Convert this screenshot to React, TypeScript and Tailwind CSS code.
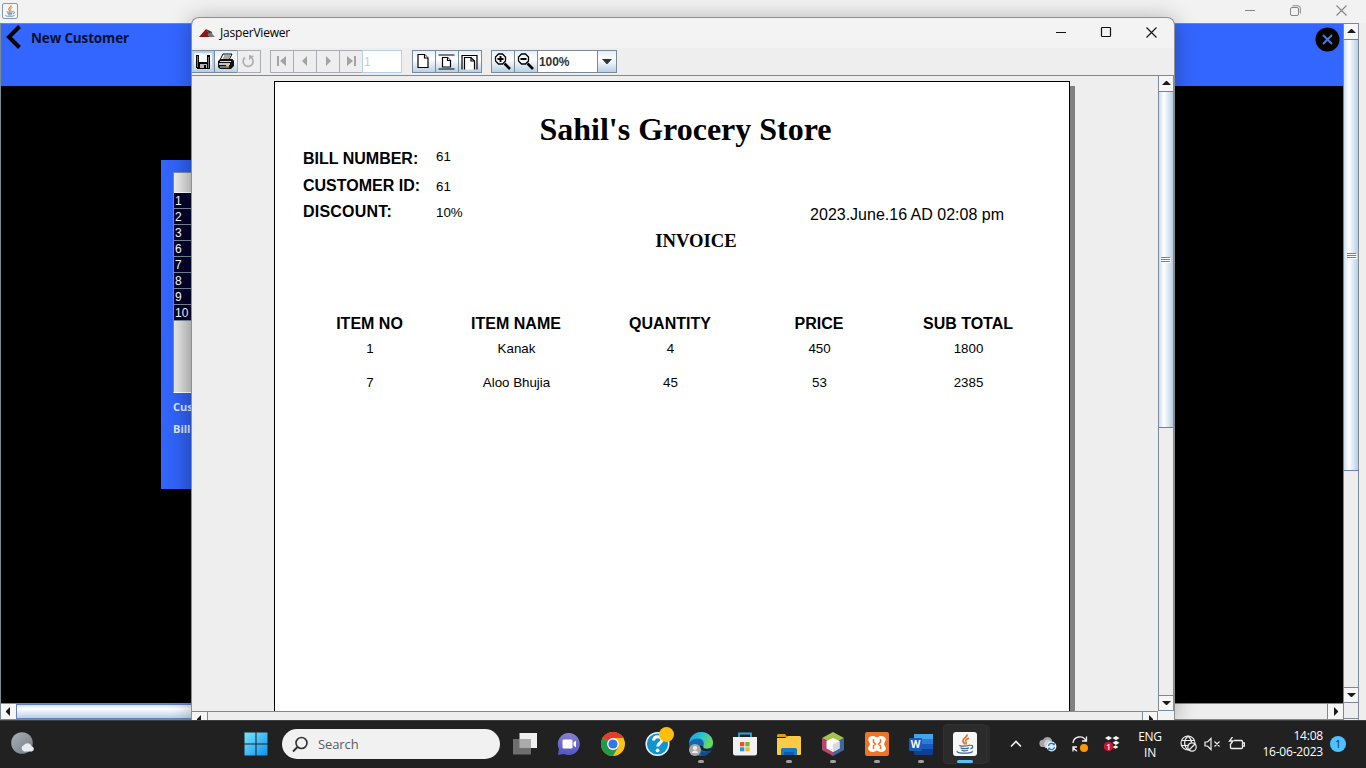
import type { ReactNode } from "react";

const ui = "font-['Open_Sans','Noto_Sans',sans-serif]";
const arial = "font-['Liberation_Sans',sans-serif]";
const times = "font-['Liberation_Serif',serif]";

/* ---------- shared drawings ---------- */

function JavaCup({ size }: { size: number }) {
  return (
    <svg width={size} height={size} viewBox="0 0 24 24" fill="none" className="shrink-0">
      <path d="M13.800 2.500c1.200 2.600-4.600 4-3.900 6.600.3 1.200 1.600 2 1.700 3.400" stroke="#e4702a" strokeWidth="1.900" />
      <path d="M16 6.200c-2.700 1-3.900 2.200-3.100 3.500.6 1 .8 1.700-.2 2.900" stroke="#e4702a" strokeWidth="1.500" />
      <path d="M6.500 13.200c-1 1 8 1.300 10.500-.2M7.500 15.700c1.500 1.200 6.500 1.200 8.500 0M8.500 18c1.500 1 4.500 1 6.500 0" stroke="#41698f" strokeWidth="1.300" />
      <path d="M17.200 13.500c3-.9 3.500 2.500.2 3.500M4.500 19c-2 1.300 3 2.200 7 2.200s9-.7 7.500-2.200" stroke="#41698f" strokeWidth="1.200" />
    </svg>
  );
}

function Tri({ dir, color = "#1a1a1a" }: { dir: "up" | "down" | "left" | "right"; color?: string }) {
  const d = {
    up: "M1 7 5 3h1l4 4z",
    down: "M1 4h9L6 8H5z",
    left: "M7 1v9L3 6V5z",
    right: "M4 1v9l4-4V5z",
  }[dir];
  return (
    <svg width="11" height="11" viewBox="0 0 11 11" className="shrink-0">
      <path d={d} fill={color} />
    </svg>
  );
}

function Grip() {
  return (
    <svg width="10" height="7" viewBox="0 0 10 7" shapeRendering="crispEdges">
      <path d="M0 .5h9M0 2.500h9M0 4.500h9" stroke="#6382bf" />
      <path d="M1 1.500h9M1 3.500h9M1 5.500h9" stroke="#fff" />
    </svg>
  );
}

function WinMin({ color }: { color: string }) {
  return (
    <svg width="11" height="11" viewBox="0 0 11 11" shapeRendering="crispEdges">
      <path d="M.5 5.500h10" stroke={color} />
    </svg>
  );
}

function WinClose({ color }: { color: string }) {
  return (
    <svg width="11" height="11" viewBox="0 0 11 11">
      <path d="M.5.5l10 10M10.500.5l-10 10" stroke={color} strokeWidth="1.100" />
    </svg>
  );
}

/* ---------- shop application behind the viewer ---------- */

const tableRows = ["1", "2", "3", "6", "7", "8", "9", "10"];

function ShopWindow() {
  return (
    <div className="flex h-[720px] w-[1366px] flex-col bg-[#eeeeee]">
      <div className="flex h-[23px] shrink-0 items-center justify-between bg-[#f2f2f2] pb-px pl-[2px] pr-[19px]">
        <div className="flex size-4 items-center justify-center rounded-[2px] border border-[#7d97b4] bg-[#f4f6f8]">
          <JavaCup size={14} />
        </div>
        <div className="flex items-center gap-[35px] pb-[2px]">
          <WinMin color="#858585" />
          <svg width="11" height="11" viewBox="0 0 11 11" fill="none" stroke="#858585">
            <rect x=".5" y="2.500" width="8" height="8" rx="1.500" />
            <path d="M2.500.8h5.500a2.300 2.300 0 0 1 2.300 2.300v5.400" />
          </svg>
          <WinClose color="#858585" />
        </div>
      </div>
      <div className="flex h-[697px] w-[1359px] border-t border-l border-[#7a8a99]">
        <div className="flex w-[1342px] flex-col">
          <div className="flex h-[62px] shrink-0 justify-between bg-[#3366ff] pl-[5px] pr-[3px]">
            <div className="flex h-7 items-center gap-[9px]">
              <svg width="16" height="24" viewBox="0 0 16 24" fill="none" stroke="#000" strokeWidth="4" className="-mt-[2px]">
                <path d="M13.500 1.500 3 12l10.500 10.500" />
              </svg>
              <span className={`${ui} text-[13.500px] font-bold leading-5 tracking-[-0.150px] text-[#07102f]`}>New Customer</span>
            </div>
            <svg width="25" height="25" viewBox="0 0 25 25" className="mt-[3px]">
              <circle cx="12.500" cy="12.500" r="12" />
              <path d="M8 8l9 9M17 8l-9 9" stroke="#4778ee" strokeWidth="2" />
            </svg>
          </div>
          <div className="h-[617px] shrink-0 bg-black pl-[160px] pt-[74px]">
            <div className="h-[329px] w-[60px] bg-linear-to-r from-[#3366ff] to-[#2a55d6] pl-3 pt-3">
              <div className="h-[221px] w-12 border border-[#7a8a99] border-b-white bg-linear-to-r from-[#e6e6e6] to-[#a0a0a0]">
                <div className="h-5 border-b border-white bg-linear-to-r from-[#ededed] to-[#a9a9a9]" />
                {tableRows.map((r) => (
                  <div
                    key={r}
                    className={`${arial} h-4 border-b border-[#7a8a99] bg-[#03012b] pl-px text-[12px] leading-[16px] text-white`}
                  >
                    {r}
                  </div>
                ))}
              </div>
              <p className={`${ui} mt-[5px] h-[18px] text-[11px] font-bold leading-[18px] text-[#dbe4ff]`}>Customer</p>
              <p className={`${ui} mt-1 h-[18px] text-[11px] font-bold leading-[18px] text-[#dbe4ff]`}>Bill</p>
            </div>
          </div>
          <div className="flex h-[17px] shrink-0 border-y border-b-[#7a8a99] border-t-[#7a8a99] bg-[#eeeeee]">
            <div className="flex w-[15px] items-center justify-center bg-[#f6f6f6]">
              <Tri dir="left" />
            </div>
            <div className="w-[800px] border border-[#6382bf] bg-linear-to-b from-[#d5e2f0] via-white via-30% to-[#b8cfe5]" />
            <div className="grow" />
            <div className="flex w-4 items-center justify-center border-l border-[#7a8a99] bg-[#f6f6f6]">
              <Tri dir="right" />
            </div>
          </div>
        </div>
        <div className="flex w-4 flex-col border-x border-[#7a8a99]">
          <div className="flex h-[15px] shrink-0 items-center justify-center bg-[#f6f6f6]">
            <Tri dir="up" />
          </div>
          <div className="flex h-[432px] items-center justify-center border-y border-[#6382bf] bg-linear-to-r from-[#cddff0] via-white via-35% to-[#b8cfe5] pl-px pt-[2px]">
            <Grip />
          </div>
          <div className="h-[216px]" />
          <div className="flex h-4 items-center justify-center border-y border-[#7a8a99] bg-[#f6f6f6] pb-px">
            <Tri dir="down" />
          </div>
          <div className="h-4 border-b border-[#7a8a99]" />
        </div>
      </div>
    </div>
  );
}

/* ---------- report viewer ---------- */

function ToolButton({ children, off = false, hot = false }: { children: ReactNode; off?: boolean; hot?: boolean }) {
  return (
    <div
      className={`-ml-px flex h-[23px] w-6 items-center justify-center border ${
        off ? "border-[#a9adb1] bg-[#eeeeee]" : "border-[#7a8a99] bg-linear-to-b from-[#e6eef6] via-white via-40% to-[#b8cfe5]"
      } ${hot ? "shadow-[inset_0_0_0_2px_#b8cfe5]" : ""}`}
    >
      {children}
    </div>
  );
}

function Nav({ d }: { d: string }) {
  return (
    <svg width="12" height="12" viewBox="0 0 12 12" className="-ml-px -mt-px">
      <path d={d} fill="#a3a3a3" />
    </svg>
  );
}

function Lens({ plus }: { plus: boolean }) {
  return (
    <svg width="17" height="17" viewBox="0 0 17 17" fill="none" stroke="#000" className="-ml-px -mt-px">
      <path d="M4.500 1h4l3 3v4l-3 3h-4l-3-3V4z" fill="#f4f8fc" strokeWidth="1.300" />
      <path d="M10.500 10.500l5.500 5.500" strokeWidth="2.600" />
      <path d={plus ? "M3.500 6h6M6.500 3v6" : "M3.500 6h6"} strokeWidth="1.900" />
    </svg>
  );
}

function Toolbar() {
  return (
    <div className="flex h-[28px] shrink-0 items-start border-b border-[#7a8a99] bg-[#eeeeee] pt-[2px]">
      <div className="flex">
        <ToolButton hot>
          <svg width="16" height="16" viewBox="0 0 16 16" shapeRendering="crispEdges" className="-ml-px">
            <path d="M1 1h14v14H2l-1-1z" />
            <path d="M4 1h8v7H4z" fill="#fff" />
            <path d="M5 10h7v4H5z" fill="#b5b5b5" />
            <path d="M9 11h2v3H9z" />
            <path d="M2 2h1v11H2zM13 3h1v11h-1z" fill="#777" />
          </svg>
        </ToolButton>
        <ToolButton>
          <svg width="18" height="17" viewBox="0 0 18 17" className="-ml-px">
            <path d="M6 1h9l-3 6H3z" fill="#fff" stroke="#000" />
            <path d="M7 3h6M6 5h6" stroke="#555" />
            <path d="M1 8l2.500-2h12L17 8v5l-3 3H3l-2-2z" fill="#111" />
            <path d="M3 8.500h11M3 14h9" stroke="#ddd" />
            <path d="M2 11h11" stroke="#fff" strokeWidth="1.400" />
            <path d="M9 12.500h3" stroke="#e9df3a" strokeWidth="1.500" />
          </svg>
        </ToolButton>
        <ToolButton off>
          <svg width="15" height="15" viewBox="0 0 15 15" fill="none" className="-ml-px">
            <path d="M4 3.500a5 5 0 1 0 6.500.2" stroke="#aeaeae" strokeWidth="1.700" />
            <path d="M8 1v5l5-4z" fill="#aeaeae" />
          </svg>
        </ToolButton>
      </div>
      <div className="ml-[10px] flex">
        <ToolButton off><Nav d="M1 1h2v10H1zM10 1v10L4 6z" /></ToolButton>
        <ToolButton off><Nav d="M8 1v10L3 6z" /></ToolButton>
        <ToolButton off><Nav d="M4 1v10l5-5z" /></ToolButton>
        <ToolButton off><Nav d="M9 1h2v10H9zM2 1v10l6-5z" /></ToolButton>
        <div className={`${arial} -ml-px h-[23px] w-[40px] border border-[#b8cfe5] bg-white pl-px text-[12px] leading-[22px] text-[#b8cfe5]`}>1</div>
      </div>
      <div className="ml-[11px] flex">
        <ToolButton>
          <svg width="12" height="16" viewBox="0 0 12 16" fill="#fff" stroke="#000" strokeWidth="1.200" className="-ml-[2px] -mt-px">
            <path d="M1 1.500h6.500l3.500 3.500v9.500H1z" />
            <path d="M7.500 1.500V5H11" />
          </svg>
        </ToolButton>
        <ToolButton>
          <svg width="17" height="16" viewBox="0 0 17 16" fill="#fff" stroke="#000" strokeWidth="1.200" className="-ml-px">
            <path d="M.5 1h16M.5 15h16" />
            <path d="M4.500 3.500h5l3 3v6.500h-8z" />
            <path d="M9.500 3.500v3h3" />
          </svg>
        </ToolButton>
        <ToolButton>
          <svg width="17" height="16" viewBox="0 0 17 16" fill="none" stroke="#000" strokeWidth="1.200" className="-ml-px">
            <path d="M1 15.500V1.500h15v14" />
            <path d="M3.500 15.500v-12H10l3.500 3.500v8.500" fill="#fff" />
            <path d="M10 3.500V7h3.500" />
          </svg>
        </ToolButton>
      </div>
      <div className="ml-[10px] flex">
        <ToolButton><Lens plus /></ToolButton>
        <ToolButton><Lens plus={false} /></ToolButton>
        <div className={`${arial} -ml-px h-[23px] w-[61px] border border-[#7a8a99] bg-white pl-px text-[12px] font-bold leading-[22px] tracking-[-0.1px] text-[#333]`}>100%</div>
        <div className="-ml-px flex h-[23px] w-5 items-center justify-center border border-[#7a8a99] bg-linear-to-b from-[#e6eef6] via-white via-40% to-[#b8cfe5]">
          <svg width="10" height="5" viewBox="0 0 10 5" className="-mt-px">
            <path d="M0 0h10L5.500 5h-1z" fill="#333" />
          </svg>
        </div>
      </div>
    </div>
  );
}

const billFields = [
  { label: "BILL NUMBER:", value: "61", row: "h-[18px]", val: "pb-[5px] -mt-[2px]", track: "" },
  { label: "CUSTOMER ID:", value: "61", row: "mt-[9px] h-[18px]", val: "pt-[2px] -my-px", track: "" },
  { label: "DISCOUNT:", value: "10%", row: "mt-[8px] h-[18px]", val: "pt-[2px] -my-px", track: "tracking-[0.2px]" },
];

const heads = ["ITEM NO", "ITEM NAME", "QUANTITY", "PRICE", "SUB TOTAL"];
const items = [
  ["1", "Kanak", "4", "450", "1800"],
  ["7", "Aloo Bhujia", "45", "53", "2385"],
];

function ReportPage() {
  return (
    <div className={`${arial} flex h-[640px] w-[796px] shrink-0 flex-col border border-black bg-white text-black`}>
      <h1 className={`${times} mt-[29px] h-9 shrink-0 pl-[27px] text-center text-[32px] font-bold leading-9`}>Sahil's Grocery Store</h1>
      <div className="mt-[3px] flex h-[75px] shrink-0 items-end justify-between pl-7 pr-[65px]">
        <div className="h-[75px]">
          {billFields.map((f) => (
            <div key={f.label} className={`flex ${f.row}`}>
              <span className={`w-[133px] text-[16px] font-bold leading-[18px] ${f.track}`}>{f.label}</span>
              <span className={`${f.val} text-[13.33px] leading-[18px]`}>{f.value}</span>
            </div>
          ))}
        </div>
        <span className="text-[16px] leading-5">2023.June.16 AD 02:08 pm</span>
      </div>
      <h2 className={`${times} mt-[6px] h-5 shrink-0 pl-[48px] text-center text-[18.67px] font-bold leading-5`}>INVOICE</h2>
      <div className="mt-[63px] grid shrink-0 grid-cols-[149px_144px_164px_134px_164px] pl-5 text-center">
        {heads.map((h) => (
          <span key={h} className="h-5 text-[16px] font-bold leading-5">{h}</span>
        ))}
      </div>
      <div className="mt-[5px] grid shrink-0 grid-cols-[149px_144px_164px_134px_164px] gap-y-[14px] pl-5 text-center">
        {items.flat().map((c, i) => (
          <span key={i} className="h-5 pl-px text-[13.33px] leading-5">{c}</span>
        ))}
      </div>
    </div>
  );
}

function ViewerWindow() {
  return (
    <div className="absolute left-[191px] top-[17px] flex h-[703px] w-[984px] flex-col overflow-hidden rounded-t-lg border-x border-t border-[#8f8f8f] bg-[#f3f3f3] shadow-[0_2px_22px_rgba(0,0,0,0.3)]">
      <div className="flex h-[30px] shrink-0 items-center justify-between pl-[7px] pr-[17px]">
        <div className="flex items-center gap-[5px]">
          <svg width="16" height="10" viewBox="0 0 16 10">
            <path d="M0 9l7-8 5 8z" fill="#8e1216" />
            <path d="M7 1l5 8 1-5z" fill="#333" />
            <path d="M8.500 6.500 11.500 4l4.500 5H10z" fill="#777" />
          </svg>
          <span className={`${ui} text-[12px] leading-5 tracking-[-0.2px] text-black`}>JasperViewer</span>
        </div>
        <div className="flex items-center gap-[34px] pb-[2px]">
          <WinMin color="#111" />
          <svg width="12" height="12" viewBox="0 0 12 12" fill="none">
            <rect x="1.500" y="1.500" width="9" height="9" rx=".8" stroke="#111" strokeWidth="1.200" />
          </svg>
          <WinClose color="#111" />
        </div>
      </div>
      <Toolbar />
      <div className="flex h-[635px] shrink-0 bg-[#eeeeee]">
        <div className="flex w-[966px] overflow-hidden pl-[82px] pt-[5px]">
          <ReportPage />
          <div className="mt-[5px] h-[640px] w-[5px] shrink-0 bg-[#808080]" />
        </div>
        <div className="flex w-4 shrink-0 flex-col border-x border-[#7a8a99]">
          <div className="flex h-[15px] shrink-0 items-center justify-center bg-[#f6f6f6]">
            <Tri dir="up" />
          </div>
          <div className="flex h-[337px] shrink-0 items-center justify-center border-y border-[#6382bf] bg-linear-to-r from-[#cddff0] via-white via-35% to-[#b8cfe5] pt-[2px]">
            <Grip />
          </div>
          <div className="grow" />
          <div className="flex h-4 items-center justify-center border-y border-[#7a8a99] bg-[#f6f6f6] pb-px">
            <Tri dir="down" />
          </div>
        </div>
      </div>
      <div className="flex h-[15px] w-[966px] shrink-0 justify-between border-t border-[#7a8a99] bg-[#eeeeee]">
        <div className="flex w-4 items-center justify-center border-r border-[#7a8a99] bg-[#f6f6f6]">
          <Tri dir="left" />
        </div>
        <div className="flex w-4 items-center justify-center border-x border-[#7a8a99] bg-[#f6f6f6]">
          <Tri dir="right" />
        </div>
      </div>
    </div>
  );
}

/* ---------- taskbar ---------- */

const taskViewIcon = (
  <svg width="24" height="24" viewBox="0 0 24 24">
    <path d="M6.500 1h18v15h-18z" fill="#f0f0f0" />
    <path d="M0 7h18v15.500H0z" fill="#777" fillOpacity=".9" />
    <path d="M6.500 7H18v9H6.500z" fill="#ababab" />
  </svg>
);

const chatIcon = (
  <svg width="24" height="24" viewBox="0 0 24 24">
    <defs>
      <linearGradient id="chat" x1="0" y1="0" x2="0" y2="1">
        <stop stopColor="#8b7fd0" />
        <stop offset="1" stopColor="#5355c4" />
      </linearGradient>
    </defs>
    <path d="M12 1a11 11 0 1 1-5 20.900L1 23l1-6A11 11 0 0 1 12 1z" fill="url(#chat)" />
    <rect x="5.500" y="7.500" width="10" height="9" rx="1.300" fill="#fff" />
    <path d="M16.500 10.500 19 8.500v7l-2.500-2z" fill="#fff" />
  </svg>
);

const chromeIcon = (
  <svg width="24" height="24" viewBox="0 0 24 24">
    <circle cx="12" cy="12" r="12" fill="#fbc116" />
    <path d="M12 12 1.600 6A12 12 0 0 1 22.400 6H12z" fill="#e33b2e" />
    <path d="M12 12 1.600 6A12 12 0 0 0 12 24l5.200-9z" fill="#229a4c" />
    <circle cx="12" cy="12" r="5.900" fill="#fff" />
    <circle cx="12" cy="12" r="4.600" fill="#2f78e8" />
  </svg>
);

const helpIcon = (
  <svg width="30" height="30" viewBox="0 0 30 30">
    <circle cx="13.500" cy="17" r="11.300" fill="#1294cf" stroke="#e8f4fa" strokeWidth="1.500" />
    <path d="M9.500 13.500c.3-5 8.500-4.800 8.300-.2-.2 2.800-4 2.700-4 6.200" fill="none" stroke="#fff" strokeWidth="3" />
    <circle cx="13.600" cy="23.300" r="1.900" fill="#fff" />
    <circle cx="22.500" cy="7.500" r="7.500" fill="#ffbe0b" />
  </svg>
);

const edgeIcon = (
  <svg width="24" height="24" viewBox="0 0 24 24">
    <defs>
      <linearGradient id="edgeTop" x1="0" y1="0" x2="1" y2=".4">
        <stop stopColor="#1b9de2" />
        <stop offset=".55" stopColor="#2bc3d2" />
        <stop offset="1" stopColor="#6fd858" />
      </linearGradient>
    </defs>
    <circle cx="12" cy="12" r="12" fill="#1267b5" />
    <path d="M0 11C1 4 6 0 12 0c7 0 12 5 12 10.500 0 4-3 6-6.500 6-2.500 0-4-1-3.300-2.200C16.500 10 13 6.500 9 6.500 5 6.500 1.500 8.500 0 11z" fill="url(#edgeTop)" />
    <path d="M9 12c-1 5 4 9.500 9 8 2-.5 3.500-1.500 4.500-2.500-1 3.500-5 6.500-10 6.500" fill="#124a8b" />
    <path d="M14.200 14.300c-1 3 5 3.500 9.800 1.200l-1.500 2.600c-5 3-12 1-11.500-4.500z" fill="#222" />
    <circle cx="6" cy="18" r="6" fill="#a9a9a9" />
    <circle cx="6" cy="16" r="2.100" fill="#ececec" />
    <path d="M2.800 21c.4-3.500 6-3.500 6.400 0z" fill="#ececec" />
  </svg>
);

const storeIcon = (
  <svg width="24" height="24" viewBox="0 0 24 24">
    <path d="M6 6V1.500h12V6" fill="none" stroke="#28a7dc" strokeWidth="1.800" />
    <path d="M0 5h24v16a2.500 2.500 0 0 1-2.500 2.500h-19A2.500 2.500 0 0 1 0 21z" fill="#f2f2f2" />
    <path d="M7 10h4.300v4.300H7z" fill="#e6542a" />
    <path d="M12.300 10h4.300v4.300h-4.300z" fill="#78b52c" />
    <path d="M7 15.300h4.300v4H7z" fill="#1e9be0" />
    <path d="M12.300 15.300h4.300v4h-4.300z" fill="#f8b517" />
  </svg>
);

const folderIcon = (
  <svg width="24" height="24" viewBox="0 0 24 24">
    <path d="M0 3.500A1.500 1.500 0 0 1 1.500 2H8l2.500 3H0z" fill="#dd9b14" />
    <path d="M0 6h8l3-2h11.500A1.500 1.500 0 0 1 24 5.500V22a1 1 0 0 1-1 1H1a1 1 0 0 1-1-1z" fill="#fccb46" />
    <path d="M4 23v-5.500A1.500 1.500 0 0 1 5.500 16h13a1.500 1.500 0 0 1 1.500 1.500V23z" fill="#1478cd" />
    <path d="M7 20h10v3H7z" fill="#0e5ca9" />
  </svg>
);

const netbeansIcon = (
  <svg width="24" height="26" viewBox="0 0 24 26">
    <path d="M12 1 23 7 12 13 1 7z" fill="#a8c34a" />
    <path d="M1 7l11 6v12L1 19z" fill="#b5476f" />
    <path d="M23 7l-11 6v12l11-6z" fill="#3d69a0" />
    <path d="M12 7l6.500 3v7.500L12 21l-6.500-3.500V10z" fill="#f7f7f7" />
    <path d="M12 13.500l6.500-3.500v7.500L12 21z" fill="#d5d8dc" />
  </svg>
);

const xamppIcon = (
  <svg width="24" height="24" viewBox="0 0 24 24">
    <rect width="24" height="24" rx="2" fill="#ee7524" />
    <path
      d="M8 5.200c-3.500 0-4.700 2.300-2.600 4.800C6.600 11.300 6.600 12.500 5.400 14c-2.100 2.500-.9 4.800 2.600 4.800 2 0 2.500-1.600 4-1.600s2 1.600 4 1.600c3.500 0 4.700-2.300 2.600-4.800-1.200-1.500-1.200-2.700 0-4 2.100-2.500.9-4.800-2.600-4.800-2 0-2.500 1.600-4 1.600s-2-1.600-4-1.600z"
      fill="#fff"
      stroke="#fff"
      strokeWidth="2.400"
    />
    <path d="M8.500 7v3.200l2 1.800-2 1.800V17M15.500 7v3.200l-2 1.800 2 1.800V17" fill="none" stroke="#ee7524" strokeWidth="1.500" />
  </svg>
);

function WordIcon() {
  return (
    <div className="relative">
      <svg width="24" height="24" viewBox="0 0 24 24">
        <path d="M5 2h19v6H5z" fill="#41a5ee" />
        <path d="M5 7h19v5H5z" fill="#2b7cd3" />
        <path d="M5 12h19v5H5z" fill="#185abd" />
        <path d="M5 17h19v5a1 1 0 0 1-1 1H6a1 1 0 0 1-1-1z" fill="#103f91" />
        <rect y="6" width="13" height="13" rx="1" fill="#185abd" />
      </svg>
      <span className={`${ui} absolute left-0 top-[6px] w-[13px] text-center text-[10px] font-bold leading-[13px] text-white`}>W</span>
    </div>
  );
}

const javaApp = (
  <div className="flex size-6 items-center justify-center rounded-[3px] bg-[#f7f7f7]">
    <JavaCup size={24} />
  </div>
);

const apps: { name: string; icon: ReactNode; state: "none" | "open" | "active"; shift?: string }[] = [
  { name: "taskview", icon: taskViewIcon, state: "none" },
  { name: "chat", icon: chatIcon, state: "none", shift: "pr-px" },
  { name: "chrome", icon: chromeIcon, state: "none" },
  { name: "help", icon: helpIcon, state: "none", shift: "pb-1 pl-[3px]" },
  { name: "edge", icon: edgeIcon, state: "open" },
  { name: "store", icon: storeIcon, state: "none", shift: "pr-px" },
  { name: "explorer", icon: folderIcon, state: "open" },
  { name: "netbeans", icon: netbeansIcon, state: "open" },
  { name: "xampp", icon: xamppIcon, state: "open" },
  { name: "word", icon: <WordIcon />, state: "open" },
  { name: "java", icon: javaApp, state: "active" },
];

function Taskbar() {
  return (
    <div className={`${ui} flex h-12 w-[1366px] items-center border-t border-[#3c3e40] bg-[#212121] pb-px text-white`}>
      <svg width="24" height="24" viewBox="0 0 24 24" className="ml-[11px]">
        <defs>
          <linearGradient id="moon" x1="0" y1="0" x2="1" y2="1">
            <stop stopColor="#aab1b9" />
            <stop offset="1" stopColor="#737b85" />
          </linearGradient>
        </defs>
        <circle cx="11" cy="11" r="10.800" fill="url(#moon)" />
        <path d="M13 19.500a3.400 3.400 0 0 1 0-6.500 4.200 4.200 0 0 1 7.500 1.200 2.700 2.700 0 0 1 .3 5.300z" fill="#e9edf0" />
      </svg>
      <svg width="24" height="24" viewBox="0 0 24 24" className="ml-[209px]">
        <defs>
          <linearGradient id="win" x1="0" y1="0" x2="24" y2="24" gradientUnits="userSpaceOnUse">
            <stop stopColor="#7be7ff" />
            <stop offset="1" stopColor="#0a90ee" />
          </linearGradient>
        </defs>
        <path d="M.5.5h11v11H.5zM12.500.5h11v11h-11zM.5 12.500h11v11H.5zM12.500 12.500h11v11h-11z" fill="url(#win)" />
      </svg>
      <div className="ml-[14px] flex h-[30px] w-[218px] items-center gap-[9px] rounded-full bg-[#f1f1f1] pl-[10px]">
        <svg width="17" height="17" viewBox="0 0 17 17" fill="none" stroke="#333" strokeWidth="1.600">
          <circle cx="9.500" cy="7" r="5.500" />
          <path d="M5.500 11 1 15.500" strokeWidth="1.900" />
        </svg>
        <span className="text-[13px] leading-5 tracking-[-0.1px] text-[#5b5b5b]">Search</span>
      </div>
      <div className="ml-[3px] flex">
        {apps.map((a) => (
          <div
            key={a.name}
            className={`relative flex h-10 w-11 items-center justify-center ${a.shift ?? ""} ${
              a.state === "active" ? "rounded-[4px] border border-[#323232] bg-[#2b2b2b] shadow-[4px_0_0_-1px_#2b2b2b]" : ""
            }`}
          >
            {a.icon}
            {a.state === "open" && <i className="absolute bottom-px h-[3px] w-[6px] rounded-full bg-[#a0a0a0]" />}
            {a.state === "active" && <i className="absolute bottom-0 h-[3px] w-4 rounded-full bg-[#5bc0f5]" />}
          </div>
        ))}
      </div>
      <svg width="12" height="8" viewBox="0 0 12 8" className="ml-[23px]" fill="none" stroke="#f2f2f2" strokeWidth="1.600">
        <path d="M1 6.500 6 1.500l5 5" />
      </svg>
      <svg width="18" height="16" viewBox="0 0 18 16" className="ml-[17px]">
        <path d="M4 11a3.600 3.600 0 0 1 0-7.200A5 5 0 0 1 13 4v7z" fill="#a6a6a6" />
        <path d="M5 8a4 4 0 0 1 5-4l4 3v5H6z" fill="#d0d0d0" />
        <circle cx="12.500" cy="10.500" r="4.900" fill="#e8f2fb" />
        <path d="M9.500 10a3.200 3.200 0 0 1 5.600-1.500M15.500 11a3.200 3.200 0 0 1-5.600 1.500" fill="none" stroke="#1673c7" strokeWidth="1.300" />
        <path d="M15.800 6.700v2.600h-2.600zM9.200 14.300v-2.600h2.600z" fill="#1673c7" />
      </svg>
      <svg width="18" height="18" viewBox="0 0 18 18" className="ml-[14px]" fill="none" stroke="#f2f2f2" strokeWidth="1.300">
        <path d="M2 8a6.800 6.800 0 0 1 13-2M15.500 1.500V6H11M2 16.500V12h4M2 12c1 2 2 3.500 4 4" />
        <circle cx="13" cy="13" r="4" fill="#ff9800" stroke="none" />
      </svg>
      <div className="relative ml-[15px] h-4 w-4">
        <svg width="16" height="16" viewBox="0 0 16 16">
          <path d="M4.500 0 8 2 4.500 4.200 1 2zM12 0l3.500 2L12 4.200 8.500 2zM12 4.700l3.500 2L12 9 8.500 6.700zM8.500 11l3-1.700 3 1.700-3 1.800z" fill="#f5f5f5" />
          <circle cx="4.500" cy="10.500" r="4.700" fill="#d3122f" />
        </svg>
        <span className="absolute left-0 top-[6px] w-[9px] text-center text-[8px] font-semibold leading-[10px]">1</span>
      </div>
      <div className="ml-[15px] w-[30px] pt-px text-center text-[12px] leading-4 tracking-[-0.3px]">
        <div>ENG</div>
        <div>IN</div>
      </div>
      <svg width="18" height="18" viewBox="0 0 18 18" className="ml-[15px]" fill="none" stroke="#eee" strokeWidth="1.200">
        <circle cx="8" cy="8" r="7" />
        <path d="M8 1C3.500 5 3.500 11 8 15M8 1c2.500 2 3.500 4 3.500 6.500M1.500 5.500h13M1.500 10.500h7" />
        <circle cx="12" cy="12" r="4.200" fill="#212121" />
        <path d="M9 15l6-6" />
      </svg>
      <svg width="17" height="14" viewBox="0 0 17 14" className="ml-[6px]" fill="none" stroke="#eee" strokeWidth="1.200">
        <path d="M1 5h2.500L7 1.500v11L3.500 9H1zM10.500 4.500l5 5M15.500 4.500l-5 5" />
      </svg>
      <svg width="17" height="14" viewBox="0 0 17 14" className="ml-[7px]" fill="none" stroke="#eee" strokeWidth="1.300">
        <path d="M6 3.500h7.500a1 1 0 0 1 1 1v6a1 1 0 0 1-1 1h-10a1 1 0 0 1-1-1V8M15 6h1.500v3H15" />
        <path d="M4.500 0 1.500 4h3.500L2 8" />
      </svg>
      <div className="ml-[8px] w-[70px] text-right text-[12px] leading-4 tracking-[-0.2px]">
        <div>14:08</div>
        <div className="whitespace-nowrap">16-06-2023</div>
      </div>
      <div className="ml-[7px] flex size-4 items-center justify-center rounded-full bg-[#4cc2ff] text-[10px] leading-4 text-[#123]">1</div>
    </div>
  );
}

export default function App() {
  return (
    <div className="relative flex h-[768px] w-[1366px] flex-col overflow-hidden">
      <ShopWindow />
      <ViewerWindow />
      <div className="relative">
        <Taskbar />
      </div>
    </div>
  );
}
